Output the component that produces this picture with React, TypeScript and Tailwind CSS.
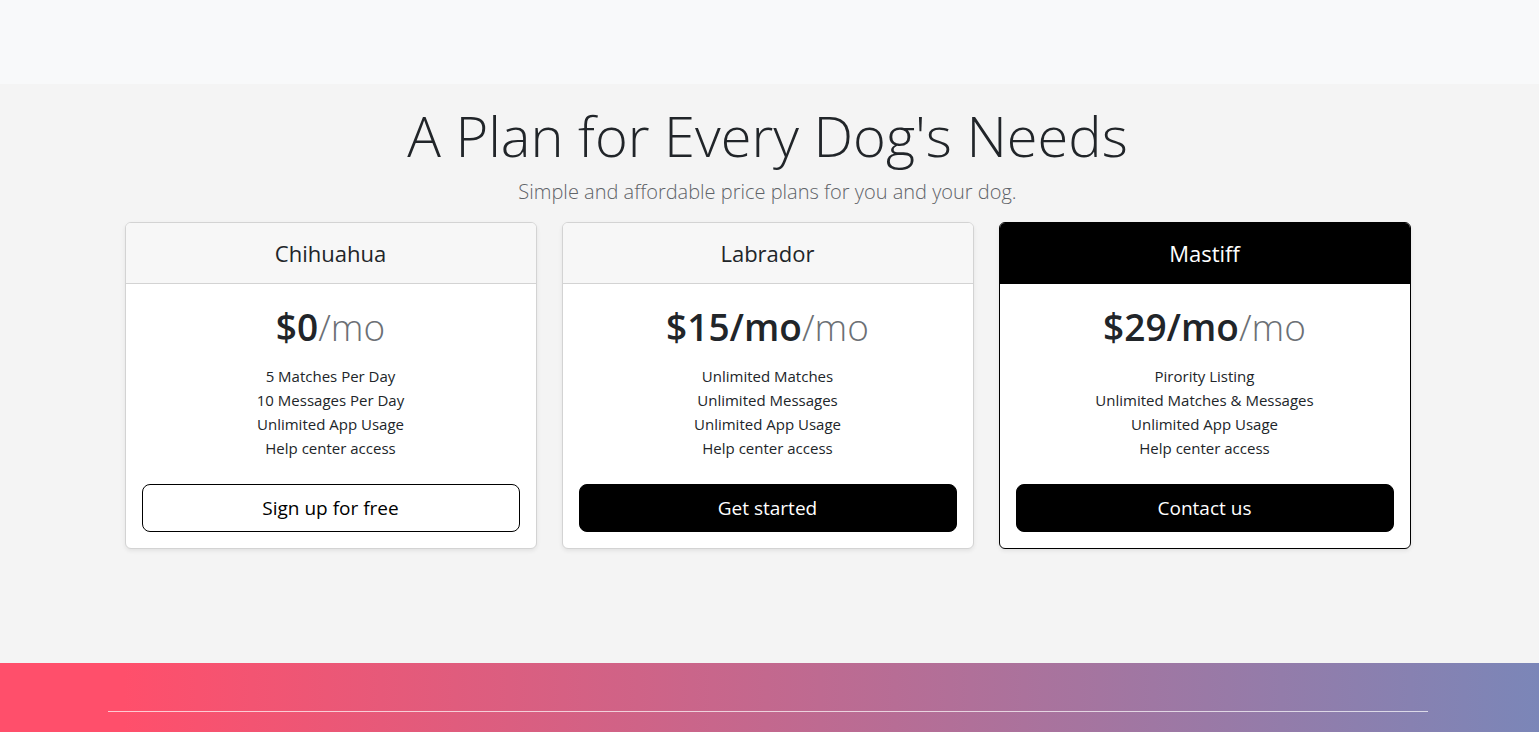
import React from 'react';

type Plan = {
    name: string;
    price: string;
    features: string[];
    cta: string;
    featured?: boolean;
    outline?: boolean;
};

const PLANS: Plan[] = [
    {
        name: 'Chihuahua',
        price: '$0',
        features: ['5 Matches Per Day', '10 Messages Per Day', 'Unlimited App Usage', 'Help center access'],
        cta: 'Sign up for free',
        outline: true,
    },
    {
        name: 'Labrador',
        price: '$15/mo',
        features: ['Unlimited Matches', 'Unlimited Messages', 'Unlimited App Usage', 'Help center access'],
        cta: 'Get started',
    },
    {
        name: 'Mastiff',
        price: '$29/mo',
        features: ['Pirority Listing', 'Unlimited Matches & Messages', 'Unlimited App Usage', 'Help center access'],
        cta: 'Contact us',
        featured: true,
    },
];

const PricingCard: React.FC<{ plan: Plan }> = ({ plan }) => (
    <div
        className={`flex flex-col rounded-[6px] bg-white shadow-[0_2px_4px_rgba(0,0,0,0.075)] border ${
            plan.featured ? 'border-black' : 'border-[#d3d3d3]'
        }`}
    >
        {/* Header */}
        <div
            className={`pt-4 pb-[15px] text-center rounded-t-[5px] border-b ${
                plan.featured ? 'bg-black text-white border-black' : 'bg-[#f7f7f7] text-[#212529] border-[#d3d3d3]'
            }`}
        >
            <h4 className="text-[22px] leading-[29px] font-normal">{plan.name}</h4>
        </div>

        {/* Body */}
        <div className="p-4 text-center">
            <h1 className="pt-[3px] text-[37px] leading-[48px] text-[#212529]">
                <span className="font-semibold">{plan.price}</span>
                <small className="text-[37px] font-light text-[#6c7075]">/mo</small>
            </h1>
            <ul className="mt-[13px] mb-6 text-[15px] leading-[24px] text-[#212529]">
                {plan.features.map((f) => (
                    <li key={f}>{f}</li>
                ))}
            </ul>
            <button
                className={`w-full h-[48px] rounded-[8px] text-[19px] border ${
                    plan.outline ? 'bg-white border-black text-black' : 'bg-black border-black text-white'
                }`}
            >
                {plan.cta}
            </button>
        </div>
    </div>
);

export default function App() {
    return (
        <div className="min-h-screen bg-[#f4f4f4] font-['Open_Sans','Segoe_UI',sans-serif] pr-[4px]">
            {/* Top band */}
            <div className="h-[84px] bg-[#f8f9fa] -mr-[4px]" />

            {/* Pricing */}
            <section className="pt-[18px] pb-[114px]">
                <div className="text-center">
                    <h1 className="text-[56px] leading-[67px] font-[350] text-[#212529]">A Plan for Every Dog's Needs</h1>
                    <p className="text-[20px] leading-[30px] font-light text-[#5f6368] mt-[8px] mb-[15px]">
                        Simple and affordable price plans for you and your dog.
                    </p>
                </div>
                <div className="mx-auto max-w-[1286px] grid grid-cols-3 gap-[25px]">
                    {PLANS.map((p) => (
                        <PricingCard key={p.name} plan={p} />
                    ))}
                </div>
            </section>

            {/* Footer */}
            <footer className="h-[120px] bg-[linear-gradient(to_right,#ff4f6b_8%,#7b86b8_100%)] pt-[48px] -mr-[4px] pr-[4px]">
                <div className="mx-auto max-w-[1320px] border-t border-white/70" />
            </footer>
        </div>
    );
}
